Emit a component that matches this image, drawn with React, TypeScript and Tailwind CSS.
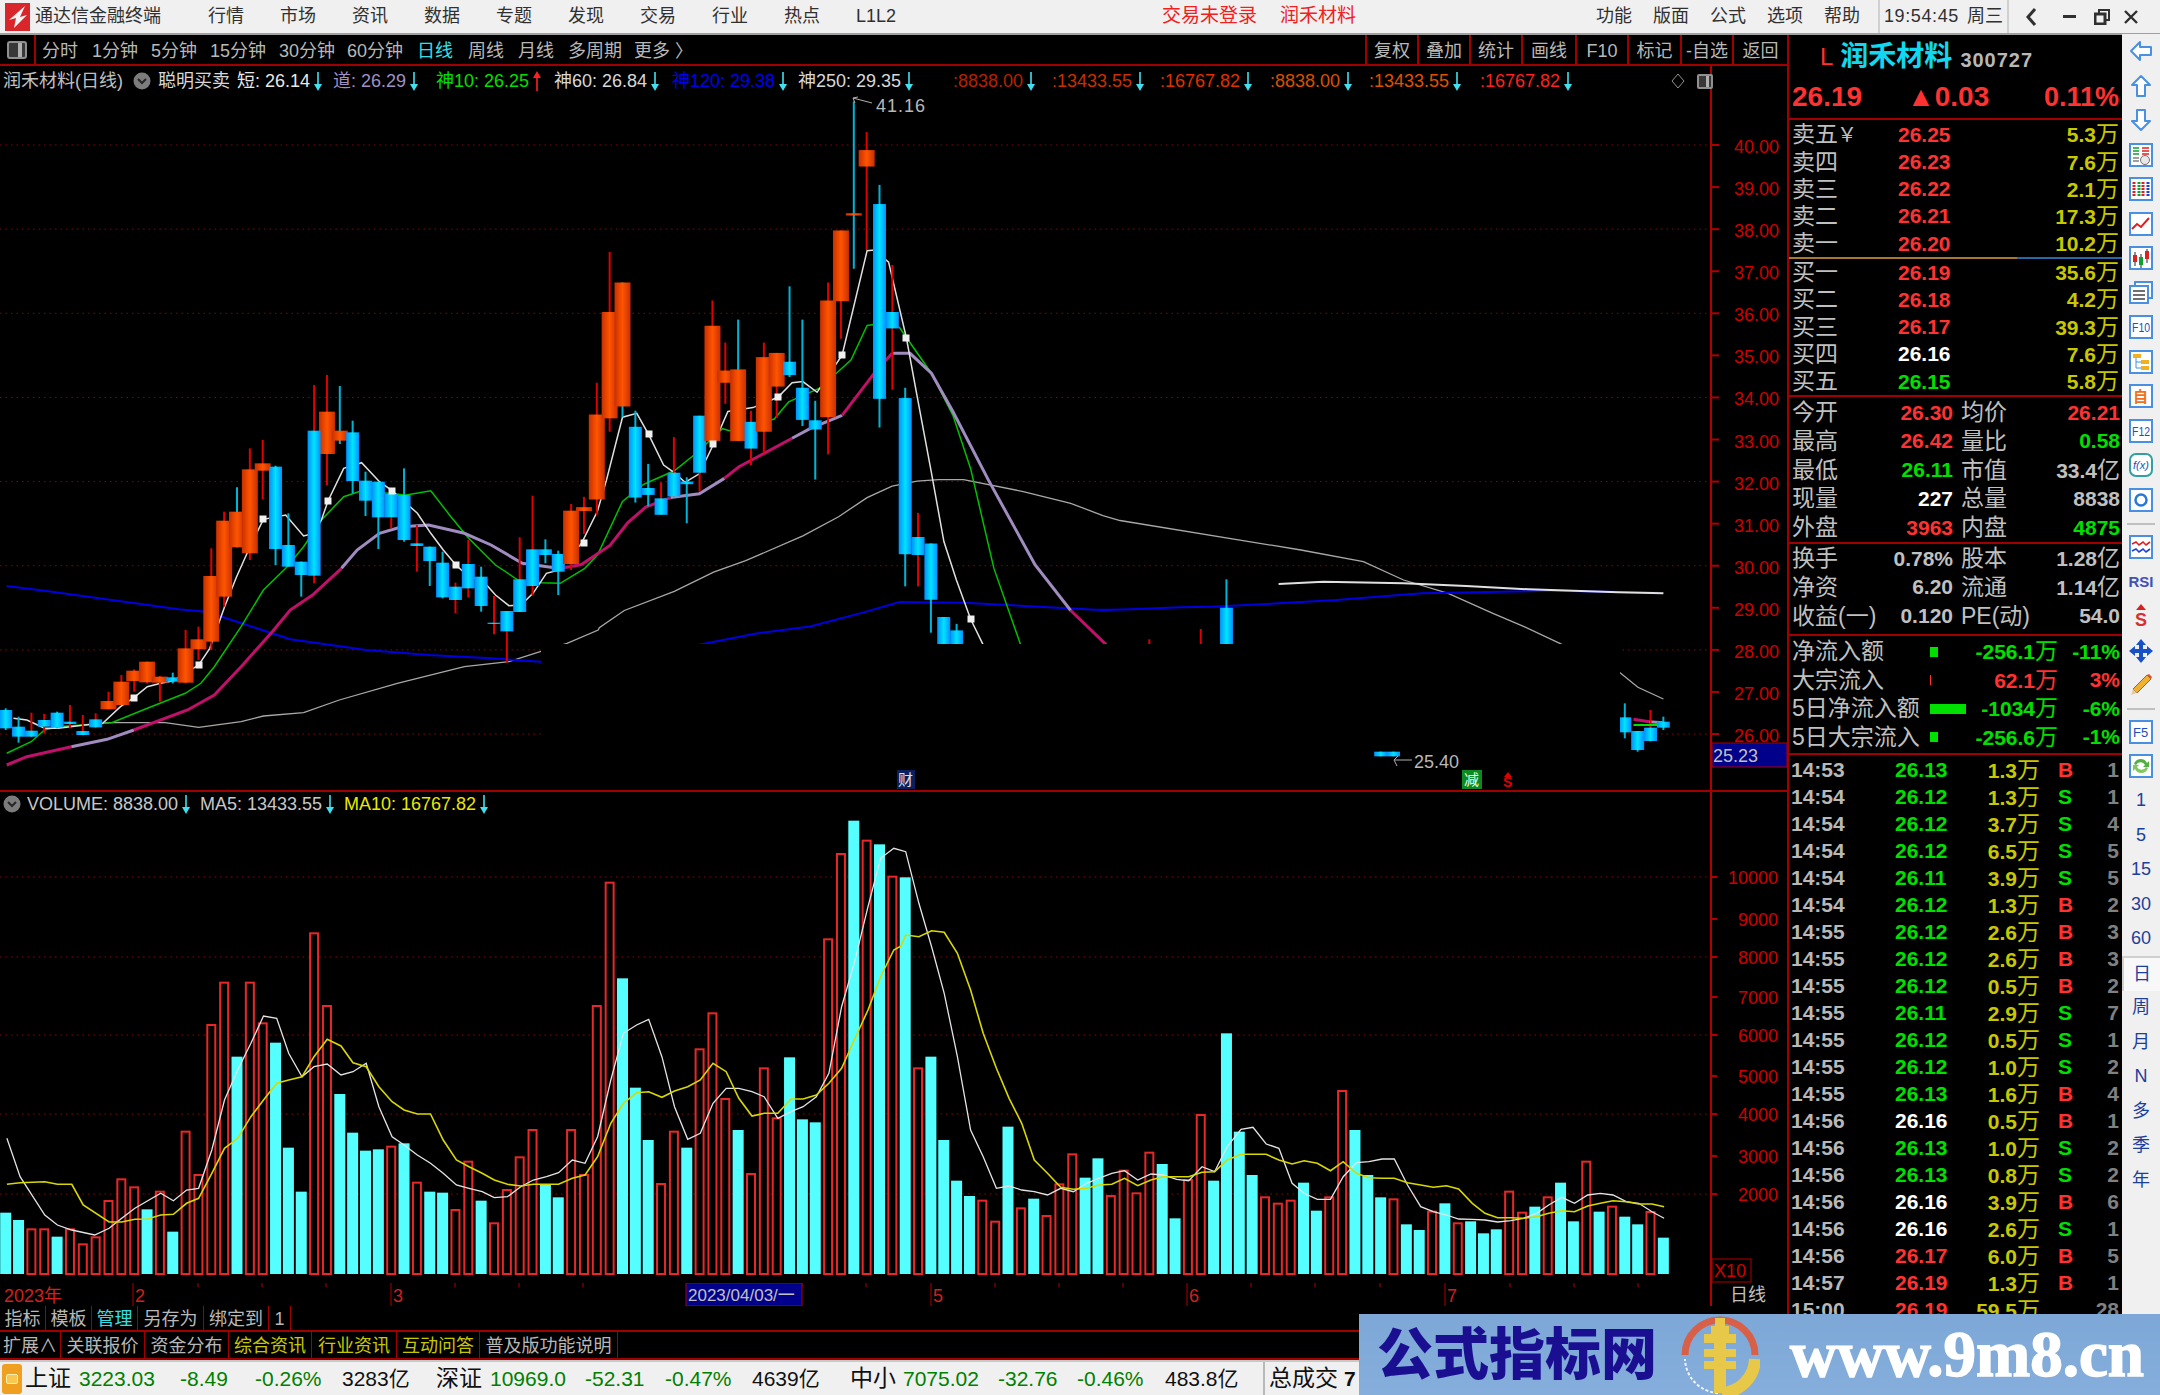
// App.tsx - stock terminal screen, daily K-line view
import React from "react";

type Pt = number[];

// the reference crops are scaled unevenly, so points are noted per crop and mapped back here
const z8 = (a: Pt) => map(a, 2.24, 0, 3, 400);
const z9 = (a: Pt) => map(a, 2.8, 560, 2.613, 90);
const z10 = (a: Pt) => map(a, 2.24, 1100, 3, 550);
const z11 = (a: Pt) => map(a, 1.742, 0, 3, 790);
const z12 = (a: Pt) => map(a, 1.742, 900, 3, 790);

function map(a: Pt, sx: number, ox: number, sy: number, oy: number) {
  const out: string[] = [];
  for (let i = 0; i < a.length; i += 2) {
    out.push(`${(a[i] / sx + ox).toFixed(1)},${(a[i + 1] / sy + oy).toFixed(1)}`);
  }
  return out.join(" ");
}

const candleX = (i: number) => 5.7 + 12.85 * i;

type Candle = [number, "o" | "c", number, number, number, number, "r" | "c"];

const candles8: Candle[] = [
  [0, "c", 930, 985, 925, 990, "c"], [1, "c", 980, 1010, 950, 1028, "c"], [2, "c", 992, 1010, 938, 1012, "r"],
  [3, "c", 960, 980, 942, 1000, "r"], [4, "c", 938, 982, 935, 985, "c"], [5, "c", 965, 972, 915, 985, "r"],
  [6, "c", 993, 1005, 945, 1006, "r"], [7, "c", 958, 982, 940, 984, "r"], [8, "o", 903, 928, 875, 928, "r"],
  [9, "o", 845, 915, 825, 915, "r"], [10, "o", 812, 843, 808, 875, "r"], [11, "o", 785, 847, 785, 850, "r"],
  [12, "o", 830, 848, 828, 905, "r"], [13, "c", 832, 845, 818, 850, "c"], [14, "o", 745, 848, 690, 850, "r"],
  [15, "o", 718, 748, 680, 780, "r"], [16, "o", 528, 725, 445, 750, "r"], [17, "o", 362, 590, 335, 620, "r"],
  [18, "o", 335, 442, 262, 442, "c"], [19, "o", 208, 460, 145, 480, "r"], [20, "o", 190, 212, 120, 298, "r"],
  [21, "c", 200, 447, 197, 495, "c"], [22, "c", 435, 500, 340, 500, "c"], [23, "c", 485, 525, 485, 590, "c"],
  [25, "o", 35, 162, -75, 255, "r"], [24, "c", 92, 527, -45, 550, "r"], [26, "o", 92, 122, -42, 132, "c"],
  [27, "c", 97, 243, 62, 280, "c"], [28, "c", 242, 302, 215, 348, "c"], [29, "c", 245, 352, 245, 447, "c"],
  [30, "c", 282, 352, 282, 385, "r"], [31, "c", 285, 420, 205, 425, "c"], [32, "c", 430, 438, 375, 515, "r"],
  [33, "c", 440, 483, 440, 558, "c"], [34, "c", 488, 592, 455, 595, "c"], [35, "c", 560, 600, 548, 640, "r"],
  [36, "c", 492, 565, 420, 592, "r"], [37, "c", 530, 618, 500, 635, "c"], [38, "c", 668, 672, 588, 703, "r"],
  [39, "c", 633, 694, 633, 788, "r"], [40, "c", 538, 636, 412, 636, "r"], [41, "c", 448, 558, 287, 585, "r"],
  [42, "c", 448, 465, 418, 490, "c"], [43, "c", 462, 515, 452, 585, "c"], [44, "o", 332, 492, 312, 510, "r"],
];

const candles9: Candle[] = [
  [45, "o", 1090, 1100, 1063, 1160, "r"], [46, "o", 848, 1070, 765, 1110, "r"], [47, "o", 580, 858, 423, 893, "r"],
  [48, "o", 503, 827, 503, 855, "c"], [49, "c", 880, 1065, 838, 1078, "c"], [50, "c", 1040, 1058, 977, 1088, "c"],
  [51, "c", 1067, 1110, 1025, 1110, "r"], [52, "c", 1000, 1062, 907, 1062, "r"], [53, "c", 1023, 1030, 1012, 1132, "c"],
  [54, "c", 851, 1000, 851, 1050, "r"], [55, "o", 616, 917, 550, 917, "r"], [56, "o", 733, 765, 660, 820, "r"],
  [57, "o", 730, 917, 600, 917, "c"], [58, "c", 867, 937, 838, 980, "r"], [59, "o", 698, 893, 660, 950, "r"],
  [60, "o", 687, 775, 687, 857, "r"], [61, "c", 710, 745, 513, 750, "c"], [62, "c", 778, 862, 600, 878, "c"],
  [63, "c", 863, 887, 812, 1018, "c"], [64, "o", 550, 855, 503, 952, "r"], [65, "o", 367, 552, 367, 650, "r"],
  [66, "o", 322, 328, 30, 467, "c"], [67, "o", 157, 200, 110, 418, "r"], [68, "c", 298, 807, 248, 882, "c"],
  [69, "c", 580, 623, 457, 783, "r"], [70, "c", 805, 1213, 778, 1297, "c"], [71, "c", 1168, 1215, 1105, 1297, "r"],
  [72, "c", 1185, 1332, 1185, 1418, "c"], [73, "c", 1377, 1450, 1377, 1450, "c"], [74, "c", 1412, 1450, 1395, 1450, "c"],
];

const candles10: Candle[] = [
  [89, "c", 282, 284, 268, 284, "r"], [93, "c", 282, 284, 237, 284, "r"], [95, "c", 173, 284, 88, 284, "c"],
  [126, "c", 502, 547, 460, 565, "c"], [127, "c", 543, 600, 543, 605, "c"], [128, "c", 533, 573, 480, 575, "r"],
  [129, "c", 515, 533, 500, 540, "c"],
];

const toY8 = (d: number) => 400 + d / 3;
const toY9 = (d: number) => 90 + d / 2.613;
const toY10 = (d: number) => 550 + d / 3;

const squares: [number, number][] = [
  [134, 698], [199, 665], [263, 519], [328, 501], [392, 491], [456, 565],
  [584, 543], [649, 434], [713, 444], [778, 397], [842, 355], [906, 338], [971, 619],
];

// volume bars: [colour, top in crop px]; first 70 from crop 11, the rest from crop 12
const volume: ["c" | "r", number][] = [
  ["c", 1268], ["c", 1290], ["r", 1318], ["r", 1318], ["c", 1340], ["r", 1318], ["r", 1363], ["r", 1342], ["r", 1233], ["r", 1168],
  ["r", 1192], ["c", 1258], ["r", 1205], ["c", 1325], ["r", 1025], ["r", 1155], ["r", 705], ["r", 578], ["c", 800], ["r", 578],
  ["r", 700], ["c", 758], ["c", 1073], ["c", 1205], ["r", 430], ["r", 648], ["c", 912], ["c", 1028], ["c", 1082], ["c", 1078],
  ["r", 1070], ["c", 1060], ["r", 1178], ["c", 1205], ["c", 1208], ["r", 1260], ["r", 1115], ["c", 1232], ["r", 1300], ["r", 1200],
  ["r", 1102], ["r", 1020], ["c", 1185], ["c", 1222], ["r", 1020], ["r", 1155], ["r", 648], ["r", 278], ["c", 565], ["c", 893],
  ["c", 1050], ["r", 1182], ["r", 1025], ["c", 1073], ["r", 778], ["r", 670], ["r", 927], ["c", 1020], ["r", 1152], ["r", 835],
  ["r", 985], ["c", 802], ["c", 988], ["c", 997], ["r", 448], ["r", 192], ["c", 92], ["r", 152], ["c", 163], ["r", 260],
  ["c", 262], ["r", 835], ["c", 800], ["c", 1050], ["c", 1172], ["c", 1218], ["r", 1232], ["r", 1295], ["c", 1010], ["r", 1255],
  ["c", 1226], ["r", 1278], ["r", 1183], ["r", 1093], ["c", 1163], ["c", 1105], ["r", 1218], ["r", 1142], ["r", 1210], ["r", 1088],
  ["c", 1122], ["c", 1285], ["r", 1170], ["r", 975], ["c", 1172], ["c", 730], ["c", 1025], ["c", 1155], ["r", 1222], ["r", 1241],
  ["r", 1232], ["c", 1178], ["c", 1262], ["r", 1222], ["r", 903], ["c", 1020], ["c", 1155], ["c", 1222], ["r", 1228], ["c", 1303],
  ["c", 1320], ["r", 1265], ["c", 1240], ["r", 1300], ["c", 1294], ["c", 1330], ["c", 1318], ["r", 1205], ["r", 1268], ["c", 1250],
  ["r", 1222], ["c", 1178], ["c", 1294], ["r", 1115], ["c", 1265], ["r", 1250], ["c", 1280], ["c", 1303], ["r", 1266], ["c", 1343],
];

const ma5 =
  z11([12,1045,35,1160,78,1275,100,1305,125,1320,165,1335,190,1315,212,1285,235,1255,280,1210,302,1232,325,1200,346,1195,369,1080,391,930,414,840,437,760,459,678,482,685,503,790,526,860,547,830,570,822,594,855,615,845,638,820,660,950,683,1040,704,1065,727,1095,750,1120,772,1150,795,1185,817,1195,840,1205,861,1223,884,1220,907,1190,929,1170,952,1160,973,1148,997,1110,1019,1120,1041,1040,1064,870,1086,730,1109,705,1130,688,1153,800,1175,950,1198,1048,1220,1030,1242,940,1265,895,1287,895,1310,905,1331,920,1355,985,1378,965,1399,950,1422,920,1444,850,1466,650,1488,520,1512,350,1534,205,1557,175]) +
  " " +
  z12([10,185,33,340,55,470,77,610,100,800,123,1020,145,1100,168,1195,190,1188,212,1200,234,1205,257,1215,280,1195,302,1205,325,1180,346,1165,369,1150,391,1142,414,1170,437,1152,458,1155,482,1168,503,1172,526,1130,548,1145,570,1070,594,1018,615,1012,638,1062,660,1075,683,1180,704,1210,727,1228,750,1228,772,1160,795,1118,817,1115,840,1107,861,1107,884,1185,907,1250,929,1265,952,1275,973,1287,997,1288,1019,1290,1041,1296,1064,1292,1086,1285,1109,1270,1130,1245,1153,1222,1175,1240,1198,1215,1220,1210,1242,1215,1265,1235,1287,1240,1310,1265,1331,1285]);

const ma10 =
  z11([12,1183,35,1178,78,1175,100,1183,125,1183,145,1245,190,1296,212,1296,235,1288,257,1287,280,1275,302,1273,325,1240,346,1225,369,1150,391,1075,414,1045,437,980,459,930,482,880,503,870,526,860,547,800,570,748,594,768,615,818,638,830,660,890,683,935,704,960,727,972,750,972,772,1050,795,1110,817,1130,840,1150,861,1170,884,1183,907,1188,929,1183,952,1183,973,1183,997,1165,1019,1155,1041,1100,1064,1000,1086,940,1109,908,1130,905,1153,922,1175,903,1198,890,1220,870,1242,820,1265,845,1287,925,1310,978,1331,970,1355,970,1378,927,1399,927,1422,915,1444,880,1466,835,1488,750,1512,660,1534,560,1557,480]) +
  " " +
  z12([2,468,10,435,33,440,55,422,77,427,100,490,123,600,145,730,168,835,190,925,212,1000,234,1110,257,1150,280,1192,302,1198,325,1195,346,1185,369,1183,391,1165,414,1187,437,1170,458,1160,482,1160,503,1160,526,1147,548,1145,570,1110,594,1093,615,1093,638,1093,660,1110,683,1122,704,1112,727,1120,750,1142,772,1115,795,1150,817,1163,840,1165,861,1165,884,1178,907,1185,929,1192,952,1187,973,1197,997,1240,1019,1270,1041,1283,1064,1283,1086,1285,1109,1280,1130,1270,1153,1262,1175,1265,1198,1248,1220,1240,1242,1232,1265,1235,1287,1242,1310,1242,1331,1250]);

const shortLine =
  z8([30,955,60,960,100,985,130,985,190,975,230,970,270,920,300,893,330,860,360,850,389,842,445,795,470,745,503,620,530,530,560,440,590,358,640,345,680,408,704,400,720,360,735,302,770,205,810,188,850,245,878,272,906,305,935,340,965,400,993,450,1022,496,1050,530,1080,540,1110,585,1140,617,1167,615,1194,580,1224,520,1252,510]) +
  " " +
  z9([60,1185,105,1100,130,1020,175,855,215,845,248,900,290,980,320,1000,350,1025,390,1003,430,925,470,840,540,830,610,803,650,765,680,762,720,790,790,693,860,420,880,418,920,450,970,648,1000,800,1040,1000,1075,1180,1110,1280,1150,1383,1185,1450]);

const greenLine =
  z8([15,1060,70,1025,100,990,130,980,250,968,330,925,415,880,450,850,480,800,540,680,590,570,640,505,680,440,720,360,770,290,810,272,910,285,965,272,1010,350,1050,415,1110,495,1160,540,1210,548,1255,550,1310,505]) +
  " " +
  z9([105,1215,175,1075,235,1030,320,995,378,952,455,885,475,890,600,860,640,815,730,778,780,735,815,705,860,615,880,613,950,620,1040,740,1100,850,1150,990,1215,1250,1290,1450]);

const grayLine =
  z8([235,968,370,968,445,982,540,965,590,948,680,938,760,900,890,850,1040,800,1140,785,1210,755,1270,730,1340,690]) +
  " " +
  z9([110,1405,180,1360,320,1310,430,1260,520,1230,680,1165,780,1115,860,1065,930,1035,1000,1022,1060,1018,1130,1018,1300,1050,1430,1080,1520,1112,1568,1125]) +
  " " +
  z10([450,0,590,35,680,90,780,130,880,190,950,230,1030,280,1165,368,1205,412,1262,447]);

const blueLine =
  z8([15,558,100,572,250,600,400,628,460,635,500,652,650,718,820,750,960,765,1100,775,1210,785]) +
  " " +
  z9([385,1450,550,1420,700,1402,850,1365,950,1338,1130,1340,1300,1348,1500,1358,1568,1358]) +
  " " +
  z10([0,180,70,178,180,172,250,170,400,160,530,150,720,130,1020,122,1250,128]);

const thickLines: [string, string][] = [
  ["#c0106a", z8([15,1095,60,1070,160,1040])],
  ["#a08cc0", z8([160,1040,240,1018,300,990])],
  ["#c0106a", z8([300,990,420,930,480,885,540,800,610,695,650,630,700,585,765,505])],
  ["#a08cc0", z8([765,505,800,450,850,400,900,380,960,375,1040,400,1100,435,1170,490,1250,505])],
  ["#c0106a", z9([0,1250,60,1240,140,1190,190,1130,240,1090,310,1065])],
  ["#a08cc0", z9([310,1065,390,1055,460,1015])],
  ["#c0106a", z9([460,1015,500,985,650,910])],
  ["#a08cc0", z9([650,910,700,885,790,850])],
  ["#c0106a", z9([790,850,880,740,930,688])],
  ["#a08cc0", z9([930,688,980,688,1040,740,1100,840,1200,1020,1330,1240,1430,1360])],
  ["#c0106a", z9([1430,1360,1530,1450])],
  ["#c0106a", z10([1195,508,1230,515])],
  ["#a08cc0", z10([1230,515,1262,518])],
];

function Candles({ list, toY }: { list: Candle[]; toY: (d: number) => number }) {
  return (
    <>
      {list.map(([i, kind, top, bot, wt, wb, wick]) => {
        const x = candleX(i);
        const w = kind === "o" ? 16 : 13;
        return (
          <g key={i}>
            <line x1={x} x2={x} y1={toY(wt)} y2={toY(wb)} stroke={wick === "r" ? "#e00000" : "#00b4d8"} strokeWidth={2} />
            <rect x={x - w / 2} y={toY(top)} width={w} height={toY(bot) - toY(top)} fill={kind === "o" ? "url(#up)" : "url(#down)"} />
          </g>
        );
      })}
    </>
  );
}

const axisRed = "#b00000";

function PriceChart() {
  const grid = [40, 38, 36, 34, 32, 30, 28, 26];
  const labels = [40, 39, 38, 37, 36, 35, 34, 33, 32, 31, 30, 29, 28, 27, 26];
  const y = (p: number) => 734 - (p - 26) * 42.07;
  return (
    <svg className="block h-[724px] w-full" viewBox="0 66 1787 724">
      <defs>
        <linearGradient id="up" x1="0" x2="1" y1="0" y2="0">
          <stop offset="0" stopColor="#c83000" />
          <stop offset="0.5" stopColor="#ff5500" />
          <stop offset="1" stopColor="#c83000" />
        </linearGradient>
        <linearGradient id="down" x1="0" x2="1" y1="0" y2="0">
          <stop offset="0" stopColor="#0090ff" />
          <stop offset="0.5" stopColor="#00e4ff" />
          <stop offset="1" stopColor="#0090ff" />
        </linearGradient>
      </defs>
      {grid.map((p) => (
        <line key={p} x1={0} x2={1711} y1={y(p)} y2={y(p)} stroke="#900000" strokeWidth={1} strokeDasharray="1.5 4" />
      ))}
      <polyline points={grayLine} fill="none" stroke="#a8a8a8" strokeWidth={1.3} />
      <polyline points={blueLine} fill="none" stroke="#0000e0" strokeWidth={2} />
      <polyline points={greenLine} fill="none" stroke="#00c000" strokeWidth={1.5} />
      {thickLines.map(([c, p], i) => (
        <polyline key={i} points={p} fill="none" stroke={c} strokeWidth={3} />
      ))}
      <polyline points={shortLine} fill="none" stroke="#e0e0e0" strokeWidth={1.5} />
      <polyline points={z10([400,102,500,95,680,100,820,108,960,118,1160,127,1262,130])} fill="none" stroke="#e0e0e0" strokeWidth={2} />
      <Candles list={candles8} toY={toY8} />
      <Candles list={candles9} toY={toY9} />
      <Candles list={candles10} toY={toY10} />
      {squares.map(([sx, sy]) => (
        <rect key={sx} x={sx - 3.5} y={sy - 3.5} width={7} height={7} fill="#f0f0f0" />
      ))}
      {/* the lower middle of the chart is blanked out in the screenshot */}
      <rect x={541} y={644} width={1079} height={146} fill="#000" />
      <polyline points={z10([1195,525,1250,525])} fill="none" stroke="#00e000" strokeWidth={2} />

      <line x1={853} x2={872} y1={98} y2={103} stroke="#b0b0b0" />
      <polyline points="858,97 853,98 855,103" fill="none" stroke="#b0b0b0" />
      <text x={876} y={112} fontSize={18} fill="#b8b8b8" letterSpacing={1}>41.16</text>
      <Candles list={[[107, "c", 605, 619, 605, 619, "c"], [108, "c", 605, 619, 605, 619, "c"]]} toY={toY10} />
      <line x1={1395} x2={1412} y1={760} y2={760} stroke="#b0b0b0" />
      <polyline points="1398,756 1394,760 1397,766" fill="none" stroke="#b0b0b0" />
      <text x={1414} y={768} fontSize={18} fill="#b8b8b8">25.40</text>
      <rect x={897} y={770} width={18} height={19} fill="#0a1f60" />
      <text x={898} y={785} fontSize={15} fill="#e0e0e0">财</text>
      <rect x={1462} y={770} width={20} height={19} fill="#0a8a20" />
      <text x={1464} y={785} fontSize={15} fill="#e8ffe8">减</text>
      <polygon points="1508,772 1512,777 1504,777" fill="#e00000" />
      <text x={1503} y={787} fontSize={14} fontWeight={700} fill="#e00000">S</text>

      {/* price axis */}
      <line x1={1711} x2={1711} y1={66} y2={790} stroke={axisRed} strokeWidth={2} />
      {labels.map((p) => (
        <g key={p}>
          <line x1={1711} x2={1719} y1={y(p)} y2={y(p)} stroke={axisRed} strokeWidth={2} />
          <text x={1779} y={y(p) + 8} fontSize={18} textAnchor="end" fill="#d00000">{p}.00</text>
        </g>
      ))}
      <rect x={1712} y={743} width={75} height={24} fill="#00008a" stroke={axisRed} />
      <text x={1713} y={762} fontSize={18} fill="#c0c0c0">25.23</text>
    </svg>
  );
}

function VolumeChart() {
  const labels: [string, number][] = [
    ["10000", 877], ["9000", 919], ["8000", 957], ["7000", 997], ["6000", 1035],
    ["5000", 1076], ["4000", 1114], ["3000", 1156], ["2000", 1194],
  ];
  const bottom = 1274;
  return (
    <svg className="block h-[491px] w-full" viewBox="0 792 1787 491">
      {[877, 957, 1035, 1114, 1194].map((yy) => (
        <line key={yy} x1={0} x2={1711} y1={yy} y2={yy} stroke="#900000" strokeWidth={1} strokeDasharray="1.5 4" />
      ))}
      {volume.map(([c, d], i) => {
        const x = candleX(i);
        const top = 790 + d / 3;
        return c === "c" ? (
          <rect key={i} x={x - 5.5} y={top} width={11} height={bottom - top} fill="#55ffff" />
        ) : (
          <rect key={i} x={x - 4} y={top} width={8} height={bottom - top} fill="#000" stroke="#e82828" strokeWidth={2} />
        );
      })}
      <polyline points={ma5} fill="none" stroke="#e4e4e4" strokeWidth={1.3} />
      <polyline points={ma10} fill="none" stroke="#d8d800" strokeWidth={1.6} />
      <line x1={1711} x2={1711} y1={792} y2={1283} stroke={axisRed} strokeWidth={2} />
      {labels.map(([t, yy]) => (
        <g key={t}>
          <line x1={1711} x2={1717} y1={yy} y2={yy} stroke={axisRed} strokeWidth={2} />
          <text x={1778} y={yy + 7} fontSize={18} textAnchor="end" fill="#d00000">{t}</text>
        </g>
      ))}
      <rect x={1712} y={1259} width={39} height={23} fill="none" stroke={axisRed} />
      <text x={1714} y={1277} fontSize={18} fill="#d00000">X10</text>
    </svg>
  );
}

function DateAxis() {
  const ticks = [198, 262, 326, 455, 519, 583, 802, 866, 995, 1059, 1123, 1251, 1315, 1380, 1510, 1574, 1638];
  const marks: [string, number][] = [["2", 133], ["3", 391], ["5", 931], ["6", 1187], ["7", 1445]];
  return (
    <svg className="block h-[23px] w-full" viewBox="0 1283 1787 23">
      <text x={4} y={1302} fontSize={18} fill="#d02020">2023年</text>
      {ticks.map((t) => (
        <line key={t} x1={t} x2={t} y1={1283} y2={1287} stroke={axisRed} />
      ))}
      {marks.map(([t, x]) => (
        <g key={t}>
          <line x1={x} x2={x} y1={1283} y2={1306} stroke={axisRed} />
          <text x={x + 2} y={1302} fontSize={18} fill="#d02020">{t}</text>
        </g>
      ))}
      <rect x={686} y={1283} width={116} height={23} fill="#00008a" stroke={axisRed} />
      <text x={688} y={1301} fontSize={17} fill="#c0c0c0">2023/04/03/一</text>
      <line x1={1711} x2={1711} y1={1283} y2={1306} stroke={axisRed} strokeWidth={2} />
      <text x={1730} y={1301} fontSize={18} fill="#c0c0c0">日线</text>
    </svg>
  );
}

function Arrow({ up, color }: { up?: boolean; color: string }) {
  return (
    <svg width={10} height={22} viewBox="0 0 10 22" className="ml-[3px] shrink-0">
      <line x1={5} x2={5} y1={up ? 6 : 2} y2={up ? 21 : 16} stroke={color} strokeWidth={1.6} />
      <polygon points={up ? "5,1 9,8 1,8" : "5,21 9,14 1,14"} fill={color} />
    </svg>
  );
}

function RoundChevron() {
  return (
    <svg width={18} height={18} viewBox="0 0 18 18" className="shrink-0">
      <circle cx={9} cy={9} r={8.5} fill="#7c7c7c" />
      <polyline points="5,7 9,11 13,7" fill="none" stroke="#262626" strokeWidth={2} />
    </svg>
  );
}

const indicators: { text: string; color: string; w: string; arrow: string; up?: boolean }[] = [
  { text: "短: 26.14", color: "text-[#e8e8e8]", w: "w-[96px]", arrow: "#40e0f0" },
  { text: "道: 26.29", color: "text-[#a090c8]", w: "w-[103px]", arrow: "#40e0f0" },
  { text: "神10: 26.25", color: "text-[#00e000]", w: "w-[118px]", arrow: "#ff2020", up: true },
  { text: "神60: 26.84", color: "text-[#d8d8d8]", w: "w-[118px]", arrow: "#40e0f0" },
  { text: "神120: 29.38", color: "text-[#0000f0]", w: "w-[126px]", arrow: "#40e0f0" },
  { text: "神250: 29.35", color: "text-[#d8d8d8]", w: "w-[155px]", arrow: "#40e0f0" },
  { text: ":8838.00", color: "text-[#b82000]", w: "w-[99px]", arrow: "#40e0f0" },
  { text: ":13433.55", color: "text-[#c83000]", w: "w-[108px]", arrow: "#40e0f0" },
  { text: ":16767.82", color: "text-[#e03000]", w: "w-[110px]", arrow: "#40e0f0" },
  { text: ":8838.00", color: "text-[#d85000]", w: "w-[99px]", arrow: "#40e0f0" },
  { text: ":13433.55", color: "text-[#e05000]", w: "w-[111px]", arrow: "#40e0f0" },
  { text: ":16767.82", color: "text-[#ff2020]", w: "w-[112px]", arrow: "#40e0f0" },
];

function Toolbar() {
  const left = [
    { t: "分时", c: "w-[50px]" }, { t: "1分钟", c: "w-[59px]" }, { t: "5分钟", c: "w-[59px]" },
    { t: "15分钟", c: "w-[69px]" }, { t: "30分钟", c: "w-[68px]" }, { t: "60分钟", c: "w-[70px]" },
    { t: "日线", c: "w-[51px] text-[#33e0e8]" }, { t: "周线", c: "w-[50px]" }, { t: "月线", c: "w-[50px]" },
    { t: "多周期", c: "w-[66px]" }, { t: "更多 〉", c: "w-[60px]" },
  ];
  const right: { t: string; c: string }[] = [
    { t: "复权", c: "w-[52px]" }, { t: "叠加", c: "w-[52px]" }, { t: "统计", c: "w-[52px]" }, { t: "画线", c: "w-[54px]" },
    { t: "F10", c: "w-[52px]" }, { t: "标记", c: "w-[53px]" }, { t: "-自选", c: "w-[52px]" }, { t: "返回", c: "w-[55px]" },
  ];
  return (
    <div className="flex h-[31px] border-b-2 border-[#a00000] text-[18px] text-[#b8b8b8]">
      <div className="flex w-[36px] items-center justify-center border-r-2 border-[#a00000]">
        <div className="flex h-[18px] w-[20px] justify-end rounded-[3px] border-2 border-[#909090] bg-[#383838] pr-[3px]">
          <div className="w-[4px] bg-[#b0b0b0]" />
        </div>
      </div>
      <div className="flex items-center pt-[3px] pl-[6px]">
        {left.map((it) => (
          <span key={it.t} className={`whitespace-nowrap ${it.c}`}>{it.t}</span>
        ))}
      </div>
      <div className="ml-auto flex">
        {right.map((it) => (
          <span key={it.t} className={`flex items-center justify-center border-l-2 border-[#a00000] pt-[3px] whitespace-nowrap ${it.c}`}>{it.t}</span>
        ))}
      </div>
    </div>
  );
}

function Tabs() {
  const row1 = [
    { t: "指标", c: "w-[46px]" }, { t: "模板", c: "w-[46px]" }, { t: "管理", c: "w-[46px] text-[#33e0e8]" },
    { t: "另存为", c: "w-[66px]" }, { t: "绑定到", c: "w-[65px]" }, { t: "1", c: "w-[22px]" },
  ];
  const row2 = [
    { t: "扩展∧", c: "w-[61px]" }, { t: "关联报价", c: "w-[84px]" }, { t: "资金分布", c: "w-[84px]" },
    { t: "综合资讯", c: "w-[83px] text-[#c8c800]" }, { t: "行业资讯", c: "w-[85px] text-[#c8c800]" },
    { t: "互动问答", c: "w-[83px] text-[#c8c800]" }, { t: "普及版功能说明", c: "w-[138px]" },
  ];
  return (
    <>
      <div className="flex h-[26px] border-b-2 border-[#a00000] text-[18px] text-[#b8b8b8]">
        {row1.map((it) => (
          <span key={it.t} className={`flex items-center justify-center border-r border-[#a00000] pt-[2px] whitespace-nowrap ${it.c}`}>{it.t}</span>
        ))}
      </div>
      <div className="flex h-[28px] border-b-2 border-[#a00000] text-[18px] text-[#b8b8b8]">
        {row2.map((it) => (
          <span key={it.t} className={`flex items-center justify-center border-r border-[#a00000] pt-[2px] whitespace-nowrap ${it.c}`}>{it.t}</span>
        ))}
      </div>
    </>
  );
}

const book: [string, string, string, string][] = [
  ["卖五", "26.25", "5.3", "text-[#ff3232]"], ["卖四", "26.23", "7.6", "text-[#ff3232]"], ["卖三", "26.22", "2.1", "text-[#ff3232]"],
  ["卖二", "26.21", "17.3", "text-[#ff3232]"], ["卖一", "26.20", "10.2", "text-[#ff3232]"],
];
const book2: [string, string, string, string][] = [
  ["买一", "26.19", "35.6", "text-[#ff3232]"], ["买二", "26.18", "4.2", "text-[#ff3232]"], ["买三", "26.17", "39.3", "text-[#ff3232]"],
  ["买四", "26.16", "7.6", "text-white"], ["买五", "26.15", "5.8", "text-[#00e000]"],
];

function BookRow({ row, yuan }: { row: [string, string, string, string]; yuan?: boolean }) {
  return (
    <div className="relative flex h-[27.2px] items-center pl-[3px] pr-[3px]">
      <span className="w-[56px] text-[23px] text-[#c0c0c0]">{row[0]}</span>
      {yuan && <span className="absolute left-[48px] text-[20px] text-[#c0c0c0]">￥</span>}
      <span className={`ml-[50px] w-[54px] text-[21px] font-bold ${row[3]}`}>{row[1]}</span>
      <span className="ml-auto text-[21px] font-bold text-[#c8c800]">{row[2]}<span className="text-[23px] font-normal">万</span></span>
    </div>
  );
}

const stats: [string, string, string, string, string, string][] = [
  ["今开", "26.30", "text-[#ff3232]", "均价", "26.21", "text-[#ff3232]"],
  ["最高", "26.42", "text-[#ff3232]", "量比", "0.58", "text-[#00e000]"],
  ["最低", "26.11", "text-[#00e000]", "市值", "33.4亿", "text-[#c0c0c0]"],
  ["现量", "227", "text-white", "总量", "8838", "text-[#c0c0c0]"],
  ["外盘", "3963", "text-[#ff3232]", "内盘", "4875", "text-[#00e000]"],
];
const stats2: [string, string, string, string, string, string][] = [
  ["换手", "0.78%", "text-[#c0c0c0]", "股本", "1.28亿", "text-[#c0c0c0]"],
  ["净资", "6.20", "text-[#c0c0c0]", "流通", "1.14亿", "text-[#c0c0c0]"],
  ["收益(一)", "0.120", "text-[#c0c0c0]", "PE(动)", "54.0", "text-[#c0c0c0]"],
];

function StatRow({ r }: { r: [string, string, string, string, string, string] }) {
  return (
    <div className="flex h-[28.8px] items-center pl-[3px] pr-[2px] text-[21px] font-bold">
      <span className="w-[85px] text-[23px] font-normal whitespace-nowrap text-[#c0c0c0]">{r[0]}</span>
      <span className={`w-[76px] text-right ${r[2]}`}>{r[1]}</span>
      <span className="ml-[8px] w-[68px] text-[23px] font-normal whitespace-nowrap text-[#c0c0c0]">{r[3]}</span>
      <span className={`ml-auto text-right ${r[5]}`}>
        {r[4].replace("亿", "")}
        {r[4].endsWith("亿") && <span className="text-[23px] font-normal">亿</span>}
      </span>
    </div>
  );
}

const flows: { label: string; bar: string; val: string; pct: string; color: string }[] = [
  { label: "净流入额", bar: "w-[8px] bg-[#00e000]", val: "-256.1", pct: "-11%", color: "text-[#00e000]" },
  { label: "大宗流入", bar: "w-[1px] bg-[#ff3232]", val: "62.1", pct: "3%", color: "text-[#ff3232]" },
  { label: "5日净流入额", bar: "w-[36px] bg-[#00e000]", val: "-1034", pct: "-6%", color: "text-[#00e000]" },
  { label: "5日大宗流入", bar: "w-[8px] bg-[#00e000]", val: "-256.6", pct: "-1%", color: "text-[#00e000]" },
];

const G = "text-[#00e000]";
const W = "text-white";
const R = "text-[#ff3232]";
const ticks: [string, string, string, string, string, string][] = [
  ["14:53", "26.13", G, "1.3", "B", "1"], ["14:54", "26.12", G, "1.3", "S", "1"], ["14:54", "26.12", G, "3.7", "S", "4"],
  ["14:54", "26.12", G, "6.5", "S", "5"], ["14:54", "26.11", G, "3.9", "S", "5"], ["14:54", "26.12", G, "1.3", "B", "2"],
  ["14:55", "26.12", G, "2.6", "B", "3"], ["14:55", "26.12", G, "2.6", "B", "3"], ["14:55", "26.12", G, "0.5", "B", "2"],
  ["14:55", "26.11", G, "2.9", "S", "7"], ["14:55", "26.12", G, "0.5", "S", "1"], ["14:55", "26.12", G, "1.0", "S", "2"],
  ["14:55", "26.13", G, "1.6", "B", "4"], ["14:56", "26.16", W, "0.5", "B", "1"], ["14:56", "26.13", G, "1.0", "S", "2"],
  ["14:56", "26.13", G, "0.8", "S", "2"], ["14:56", "26.16", W, "3.9", "B", "6"], ["14:56", "26.16", W, "2.6", "S", "1"],
  ["14:56", "26.17", R, "6.0", "B", "5"], ["14:57", "26.19", R, "1.3", "B", "1"], ["15:00", "26.19", R, "59.5", "", "28"],
];

function RightPanel() {
  return (
    <div className="flex w-[335px] shrink-0 flex-col overflow-hidden border-l-2 border-[#a00000] bg-black">
      <div className="flex h-[41px] items-end pb-[1px]">
        <span className="ml-[31px] text-[24px] text-[#ff3232]">L</span>
        <span className="ml-[7px] text-[28px] leading-[36px] font-bold whitespace-nowrap text-[#11d8f0]">润禾材料</span>
        <span className="ml-[8px] text-[20px] font-bold tracking-[1px] text-[#b8b8b8]">300727</span>
      </div>
      <div className="mb-[1px] flex h-[44px] items-center border-b-2 border-[#a00000] pl-[3px] pr-[3px] text-[28px] font-bold text-[#ff3232]">
        <span className="w-[115px]">26.19</span>
        <span>▲0.03</span>
        <span className="ml-auto text-[27px]">0.11%</span>
      </div>
      {book.map((r, i) => (
        <BookRow key={r[0]} row={r} yuan={i === 0} />
      ))}
      <div className="flex h-[2px]">
        <div className="w-[228px] bg-[#a87830]" />
        <div className="flex-1 bg-[#2868a8]" />
      </div>
      {book2.map((r) => (
        <BookRow key={r[0]} row={r} />
      ))}
      <div className="mb-[1px] h-[2px] bg-[#a00000]" />
      {stats.map((r) => (
        <StatRow key={r[0]} r={r} />
      ))}
      <div className="h-[2px] bg-[#a00000]" />
      <div className="pb-[4px]">
        {stats2.map((r) => (
          <StatRow key={r[0]} r={r} />
        ))}
      </div>
      <div className="mb-[1px] h-[2px] bg-[#a00000]" />
      {flows.map((f) => (
        <div key={f.label} className="flex h-[28.5px] items-center pl-[3px] pr-[2px] text-[21px] font-bold">
          <span className="w-[138px] text-[23px] font-normal whitespace-nowrap text-[#c0c0c0]">{f.label}</span>
          <span className="w-[36px]"><span className={`block h-[10px] ${f.bar}`} /></span>
          <span className={`w-[92px] text-right ${f.color}`}>{f.val}<span className="text-[23px] font-normal">万</span></span>
          <span className={`ml-auto ${f.color}`}>{f.pct}</span>
        </div>
      ))}
      <div className="mt-[2px] mb-[1px] h-[2px] bg-[#a00000]" />
      {ticks.map((t, i) => (
        <div key={i} className="flex h-[27px] shrink-0 items-center pl-[2px] pr-[3px] text-[21px] font-bold">
          <span className="w-[104px] text-[#b8b8b8]">{t[0]}</span>
          <span className={`w-[64px] ${t[2]}`}>{t[1]}</span>
          <span className="w-[81px] text-right text-[#c8c800]">{t[3]}<span className="text-[23px] font-normal">万</span></span>
          <span className={`ml-[18px] w-[16px] ${t[4] === "B" ? "text-[#ff3232]" : "text-[#00e000]"}`}>{t[4]}</span>
          <span className="ml-auto text-[#808080]">{t[5]}</span>
        </div>
      ))}
    </div>
  );
}

function Outline({ d }: { d: string }) {
  return (
    <svg width={24} height={24} viewBox="0 0 24 24">
      <path d={d} fill="#fff" stroke="#4a90e2" strokeWidth={2} strokeLinejoin="round" />
    </svg>
  );
}

function Box({ children }: { children: React.ReactNode }) {
  return (
    <svg width={24} height={24} viewBox="0 0 24 24">
      <rect x={1} y={1} width={22} height={22} fill="#fff" stroke="#4a90e2" strokeWidth={2} />
      {children}
    </svg>
  );
}

const sideIcons: React.ReactNode[] = [
  <Outline key="l" d="M2 12 L11 3 V8 H22 V16 H11 V21 Z" />,
  <Outline key="u" d="M12 2 L21 11 H16 V22 H8 V11 H3 Z" />,
  <Outline key="d" d="M12 22 L21 13 H16 V2 H8 V13 H3 Z" />,
  <Box key="a">
    <path d="M4 5h6M4 8h6M4 11h6" stroke="#10a030" strokeWidth={1.6} />
    <path d="M13 5h7M13 8h7M13 11h7" stroke="#e02020" strokeWidth={1.6} />
    <path d="M4 15h6M4 18h6" stroke="#808080" strokeWidth={1.6} />
    <circle cx={16} cy={17} r={4.5} fill="#e8e8e8" stroke="#707070" />
  </Box>,
  <Box key="b">
    <path d="M5 5v14" stroke="#e02020" strokeWidth={3} strokeDasharray="2 1" />
    <path d="M10 5v14" stroke="#10a030" strokeWidth={3} strokeDasharray="2 1" />
    <path d="M14 5v14" stroke="#e02020" strokeWidth={3} strokeDasharray="2 1" />
    <path d="M19 5v14" stroke="#2040d0" strokeWidth={3} strokeDasharray="2 1" />
  </Box>,
  <Box key="c">
    <polyline points="3,17 8,12 12,15 20,6" fill="none" stroke="#e02020" strokeWidth={2} />
  </Box>,
  <Box key="k">
    <path d="M6 6v14M12 8v14M18 3v14" stroke="#202020" />
    <rect x={4} y={9} width={4} height={7} fill="#e02020" />
    <rect x={10} y={11} width={4} height={8} fill="#10a030" />
    <rect x={16} y={5} width={4} height={8} fill="#e02020" />
  </Box>,
  <svg key="w" width={24} height={24} viewBox="0 0 24 24">
    <rect x={6} y={1} width={17} height={16} fill="#fff" stroke="#4a90e2" strokeWidth={2} />
    <rect x={1} y={5} width={18} height={17} fill="#fff" stroke="#4a90e2" strokeWidth={2} />
    <path d="M4 10h12M4 14h12M4 18h12" stroke="#707070" strokeWidth={2} />
  </svg>,
  <Box key="f10">
    <text x={3} y={17} fontSize={12} textLength={18} lengthAdjust="spacingAndGlyphs" fill="#2050c0">F10</text>
  </Box>,
  <Box key="t">
    <rect x={4} y={4} width={8} height={4} fill="#f0b020" />
    <rect x={12} y={10} width={8} height={4} fill="#f0b020" />
    <rect x={12} y={16} width={8} height={4} fill="#f0b020" />
    <path d="M7 8v10h5M7 12h5" stroke="#4a90e2" fill="none" />
  </Box>,
  <Box key="z">
    <text x={4} y={18} fontSize={15} fontWeight={700} fill="#f07020">自</text>
  </Box>,
  <Box key="f12">
    <text x={3} y={17} fontSize={12} textLength={18} lengthAdjust="spacingAndGlyphs" fill="#2050c0">F12</text>
  </Box>,
  <svg key="fx" width={24} height={24} viewBox="0 0 24 24">
    <rect x={1} y={1} width={22} height={22} rx={6} fill="#fff" stroke="#30a0a0" strokeWidth={2} />
    <text x={4} y={16} fontSize={11} fontStyle="italic" fill="#2050c0">f(x)</text>
  </svg>,
  <Box key="o">
    <circle cx={12} cy={12} r={5.5} fill="none" stroke="#2878d8" strokeWidth={2.5} />
  </Box>,
  "sep",
  <Box key="wave">
    <polyline points="3,9 7,7 10,10 14,7 17,10 21,7" fill="none" stroke="#e02020" strokeWidth={1.6} />
    <polyline points="3,16 7,14 10,17 14,14 17,17 21,14" fill="none" stroke="#2040d0" strokeWidth={1.6} />
  </Box>,
  <span key="rsi" className="text-[15px] font-bold text-[#4050b8]">RSI</span>,
  <svg key="s" width={24} height={26} viewBox="0 0 24 26">
    <polygon points="12,1 17,7 7,7" fill="#d82020" />
    <text x={6} y={23} fontSize={18} fontWeight={700} fill="#d83030">S</text>
  </svg>,
  <svg key="m" width={26} height={26} viewBox="0 0 26 26">
    <path d="M13 1l5 6h-3v4h4V8l6 5-6 5v-3h-4v4h3l-5 6-5-6h3v-4H7v3l-6-5 6-5v3h4V7H8z" fill="#1850c8" />
  </svg>,
  <svg key="p" width={26} height={26} viewBox="0 0 26 26">
    <polygon points="5,17 19,3 23,7 9,21" fill="#f0b030" stroke="#a06810" />
    <polygon points="5,17 9,21 3,23" fill="#e8c8a0" />
    <polygon points="19,3 23,7 24,5 21,2" fill="#d85040" />
  </svg>,
  "sep2",
  <Box key="f5">
    <text x={4} y={17} fontSize={13} fill="#2050c0">F5</text>
  </Box>,
  <Box key="rf">
    <path d="M5 10 a7 7 0 0 1 13 -1 l2 -2 v6 h-6 l2 -2 a5 5 0 0 0 -9 0z" fill="#50b040" />
    <path d="M19 14 a7 7 0 0 1 -13 1 l-2 2 v-6 h6 l-2 2 a5 5 0 0 0 9 0z" fill="#80c860" />
  </Box>,
];

const sideLabels = ["1", "5", "15", "30", "60", "日", "周", "月", "N", "多", "季", "年"];

function Sidebar() {
  return (
    <div className="-mt-[1px] flex w-[38px] shrink-0 flex-col items-center bg-[#f0f0f0]">
      {sideIcons.map((ic, i) =>
        ic === "sep" || ic === "sep2" ? (
          <div key={i} className={`flex w-[28px] items-center ${ic === "sep" ? "h-[13px]" : "h-[12px]"}`}>
            <div className="h-[2px] w-full bg-[#c0c0c0]" />
          </div>
        ) : (
          <div key={i} className="flex h-[34.5px] w-full items-center justify-center">{ic}</div>
        )
      )}
      {sideLabels.map((t) => (
        <div
          key={t}
          className={`flex w-full items-center justify-center text-[18px] text-[#1c3f9c] ${
            t === "日" ? "h-[34.5px] border-t-2 border-l-2 border-[#d0d0d0] bg-[#f8f8f8]" : "h-[34.5px]"
          }`}
        >
          {t}
        </div>
      ))}
    </div>
  );
}

function TopBar() {
  const menu = ["行情", "市场", "资讯", "数据", "专题", "发现", "交易", "行业", "热点", "L1L2"];
  const right = ["功能", "版面", "公式", "选项", "帮助"];
  return (
    <div className="flex h-[35px] items-center border-b-2 border-[#a0a0a0] bg-[#f0f0f0] text-[18px] whitespace-nowrap text-[#303030]">
      <svg width={25} height={28} viewBox="0 0 25 28" className="ml-[5px] shrink-0">
        <rect width={25} height={28} fill="#d8262a" />
        <path d="M20 3 L15 14 L22 12 L9 25 L11 15 L4 17 Z" fill="#f4f4f4" />
      </svg>
      <span className="ml-[5px] w-[173px]">通达信金融终端</span>
      {menu.map((m) => (
        <span key={m} className="w-[72px]">{m}</span>
      ))}
      <span className="ml-[234px] w-[118px] text-[19px] text-[#f02020]">交易未登录</span>
      <span className="w-[316px] text-[19px] text-[#f02020]">润禾材料</span>
      {right.map((m, i) => (
        <span key={m} className={i === 4 ? "w-[54px]" : "w-[57px]"}>{m}</span>
      ))}
      <span className="flex h-full items-center border-x-2 border-[#d0d0d0] px-[4px]">
        <span className="w-[83px] tracking-[0.6px]">19:54:45</span>
        <span>周三</span>
      </span>
      <svg width={14} height={20} viewBox="0 0 14 20" className="ml-[16px]"><polyline points="10,2 3,10 10,18" fill="none" stroke="#303030" strokeWidth={3} /></svg>
      <span className="ml-[24px] h-[3px] w-[13px] bg-[#303030]" />
      <svg width={16} height={16} viewBox="0 0 16 16" className="ml-[18px]">
        <rect x={5} y={1} width={10} height={10} fill="none" stroke="#303030" strokeWidth={2} />
        <rect x={1} y={5} width={10} height={10} fill="#f0f0f0" stroke="#303030" strokeWidth={3} />
      </svg>
      <svg width={16} height={16} viewBox="0 0 16 16" className="ml-[13px]"><path d="M2 2 L14 14 M14 2 L2 14" stroke="#303030" strokeWidth={2.4} /></svg>
    </div>
  );
}

function StatusBar() {
  const items = [
    { t: "上证", c: "w-[54px] text-[23px]" }, { t: "3223.03", c: "w-[101px] text-[#008000]" }, { t: "-8.49", c: "w-[75px] text-[#008000]" },
    { t: "-0.26%", c: "w-[87px] text-[#008000]" }, { t: "3283亿", c: "w-[94px]" }, { t: "深证", c: "w-[54px] text-[23px]" },
    { t: "10969.0", c: "w-[95px] text-[#008000]" }, { t: "-52.31", c: "w-[80px] text-[#008000]" }, { t: "-0.47%", c: "w-[87px] text-[#008000]" },
    { t: "4639亿", c: "w-[98px]" }, { t: "中小", c: "w-[53px] text-[23px]" }, { t: "7075.02", c: "w-[95px] text-[#008000]" },
    { t: "-32.76", c: "w-[79px] text-[#008000]" }, { t: "-0.46%", c: "w-[88px] text-[#008000]" }, { t: "483.8亿", c: "w-[98px]" },
  ];
  return (
    <div className="flex h-[35px] items-center border-t-2 border-[#c8c8c8] bg-[#f0f0f0] text-[21px] whitespace-nowrap text-[#101010]">
      <div className="ml-[2px] flex h-[30px] w-[20px] items-center justify-center rounded-[3px] bg-[#f0a020]">
        <div className="h-[10px] w-[12px] rounded-[2px] border border-[#fff0b0] bg-[#f8c850]" />
      </div>
      <div className="ml-[3px] flex items-center">
        {items.map((it, i) => (
          <span key={i} className={it.c}>{it.t}</span>
        ))}
      </div>
      <span className="flex h-full items-center border-l-2 border-[#b8b8b8] pl-[4px] text-[23px]">总成交</span>
      <span className="ml-[6px] font-bold">7</span>
    </div>
  );
}

function Watermark() {
  return (
    <div className="absolute right-0 bottom-0 flex h-[81px] w-[801px] items-center bg-gradient-to-b from-[#7da7d6] to-[#85aedc] pl-[18px]">
      <span className="w-[283px] text-[56px] leading-none font-black whitespace-nowrap text-[#1a0f90]">公式指标网</span>
      <svg width={80} height={80} viewBox="0 0 80 80" className="ml-[20px] shrink-0">
        <path d="M5 40 A35 35 0 0 1 75 40" fill="none" stroke="#d86048" strokeWidth={7} />
        <path d="M75 44 A35 35 0 0 1 42 78" fill="none" stroke="#e8c848" strokeWidth={12} />
        <path d="M38 78 A35 35 0 0 1 5 44" fill="none" stroke="#f0f4fa" strokeWidth={2} strokeDasharray="3 2" />
        <path d="M35 3h10v8h4v8h7v9H46v6h10v8H46v4h10v8H46v24h-12V54H24v-8h10v-4H24v-8h10v-6H24v-9h7v-8h4z" fill="#e8c848" />
      </svg>
      <span className="ml-[30px] font-['Liberation_Serif',serif] text-[65px] leading-none font-bold whitespace-nowrap text-white [-webkit-text-stroke:1.5px_white]">www.9m8.cn</span>
    </div>
  );
}

export default function App() {
  return (
    <div className="relative flex h-[1395px] w-[2160px] flex-col overflow-hidden bg-black font-['Liberation_Sans','Noto_Sans_CJK_SC',sans-serif]">
      <TopBar />
      <div className="flex h-[1325px]">
        <div className="flex w-[1787px] shrink-0 flex-col bg-black">
          <Toolbar />
          <div className="relative h-[726px] border-b-2 border-[#a00000]">
            <PriceChart />
            <div className="absolute top-[1px] left-0 flex h-[28px] items-center pl-[3px] text-[18px] whitespace-nowrap">
              <span className="w-[130px] text-[#c0c0c0]">润禾材料(日线)</span>
              <RoundChevron />
              <span className="ml-[7px] w-[79px] text-[#d8d8d8]">聪明买卖</span>
              {indicators.map((it, i) => (
                <span key={i} className={`flex items-center ${it.w} ${it.color}`}>
                  {it.text}
                  <Arrow color={it.arrow} up={it.up} />
                </span>
              ))}
              <svg width={16} height={18} viewBox="0 0 16 18" className="ml-[78px]"><polygon points="8,2 14,9 8,16 2,9" fill="none" stroke="#909090" /></svg>
              <div className="ml-[11px] flex h-[15px] w-[16px] justify-end rounded-[2px] border-2 border-[#909090] bg-[#383838] pr-[2px]">
                <div className="w-[3px] bg-[#b0b0b0]" />
              </div>
            </div>
          </div>
          <div className="relative h-[491px]">
            <VolumeChart />
            <div className="absolute top-0 left-0 flex h-[24px] items-center pl-[3px] text-[18px] whitespace-nowrap">
              <RoundChevron />
              <span className="ml-[6px] flex w-[173px] items-center text-[#c8c8c8]">VOLUME: 8838.00<Arrow color="#40e0f0" /></span>
              <span className="flex w-[144px] items-center text-[#c8c8c8]">MA5: 13433.55<Arrow color="#40e0f0" /></span>
              <span className="flex items-center text-[#e8e800]">MA10: 16767.82<Arrow color="#40e0f0" /></span>
            </div>
          </div>
          <DateAxis />
          <Tabs />
        </div>
        <RightPanel />
        <Sidebar />
      </div>
      <StatusBar />
      <Watermark />
    </div>
  );
}
